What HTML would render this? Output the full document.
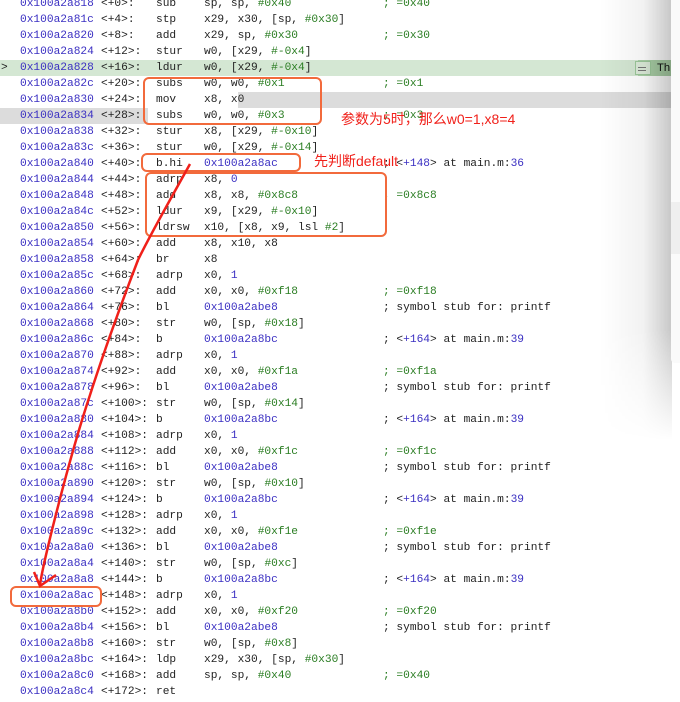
<!DOCTYPE html>
<html><head><meta charset="utf-8"><style>
html,body{margin:0;padding:0;background:#fff;width:680px;height:702px;overflow:hidden;position:relative}
.l{position:absolute;left:0;height:16px;width:680px;font:11.2px/16px "Liberation Mono",monospace;color:#222;white-space:pre}
.l span{position:absolute;top:0}
.a{left:20px;color:#3a2fc2}
.o{left:101px}
.m{left:156px}
.p{left:204px}
.c{left:383px}
.b{color:#3a2fc2}
.g{color:#2a7d22}
.box{position:absolute;border:2px solid #f26a3c;border-radius:6px}
.ann{position:absolute;color:#f0201a;font:14px/16px "Liberation Sans","Noto Sans CJK SC",sans-serif;white-space:nowrap}
</style></head><body>
<div style="position:absolute;left:0;top:60px;width:640px;height:16px;background:#d4e7d3"></div>
<div style="position:absolute;left:638px;top:60px;width:34px;height:16px;background:#a9cfa6"></div>
<div style="position:absolute;left:635px;top:61px;width:14px;height:12px;border:1px solid #9cc89a;background:#dcebd9"></div>
<div style="position:absolute;left:638px;top:67px;width:8px;height:1px;background:#777"></div>
<div style="position:absolute;left:638px;top:70px;width:8px;height:1px;background:#777"></div>
<div style="position:absolute;left:657px;top:60px;font:11.2px/16px 'Liberation Sans',sans-serif;color:#111">Th</div>
<div style="position:absolute;left:238px;top:92px;width:434px;height:16px;background:#dcdcdc"></div>
<div style="position:absolute;left:0;top:108px;width:148px;height:16px;background:#dcdcdc"></div>
<div style="position:absolute;left:600px;top:0;width:72px;height:440px;background:linear-gradient(90deg,rgba(0,0,0,0),rgba(0,0,0,0.05) 60%,rgba(0,0,0,0.22));-webkit-mask-image:linear-gradient(180deg,#000 75%,transparent);mask-image:linear-gradient(180deg,#000 75%,transparent)"></div>
<div style="position:absolute;left:671px;top:0;width:9px;height:363px;background:#fafafa;border-bottom-left-radius:4px"></div>
<div style="position:absolute;left:671px;top:202px;width:9px;height:52px;background:#efefef"></div>

<div class="l" style="top:-4px"><span class="a">0x100a2a818</span><span class="o">&lt;+0&gt;:</span><span class="m">sub</span><span class="p">sp, sp, <i class="g" style="font-style:normal">#0x40</i></span><span class="c g">; =0x40</span></div>
<div class="l" style="top:12px"><span class="a">0x100a2a81c</span><span class="o">&lt;+4&gt;:</span><span class="m">stp</span><span class="p">x29, x30, [sp, <b class="g" style="font-weight:normal">#0x30</b>]</span></div>
<div class="l" style="top:28px"><span class="a">0x100a2a820</span><span class="o">&lt;+8&gt;:</span><span class="m">add</span><span class="p">x29, sp, <b class="g" style="font-weight:normal">#0x30</b></span><span class="c g">; =0x30</span></div>
<div class="l" style="top:44px"><span class="a">0x100a2a824</span><span class="o">&lt;+12&gt;:</span><span class="m">stur</span><span class="p">w0, [x29, <b class="g" style="font-weight:normal">#-0x4</b>]</span></div>
<div class="l" style="top:60px"><span style="left:1px">&gt;</span><span class="a">0x100a2a828</span><span class="o">&lt;+16&gt;:</span><span class="m">ldur</span><span class="p">w0, [x29, <b class="g" style="font-weight:normal">#-0x4</b>]</span></div>
<div class="l" style="top:76px"><span class="a">0x100a2a82c</span><span class="o">&lt;+20&gt;:</span><span class="m">subs</span><span class="p">w0, w0, <b class="g" style="font-weight:normal">#0x1</b></span><span class="c g">; =0x1</span></div>
<div class="l" style="top:92px"><span class="a">0x100a2a830</span><span class="o">&lt;+24&gt;:</span><span class="m">mov</span><span class="p">x8, x0</span></div>
<div class="l" style="top:108px"><span class="a">0x100a2a834</span><span class="o">&lt;+28&gt;:</span><span class="m">subs</span><span class="p">w0, w0, <b class="g" style="font-weight:normal">#0x3</b></span><span class="c g">; =0x3</span></div>
<div class="l" style="top:124px"><span class="a">0x100a2a838</span><span class="o">&lt;+32&gt;:</span><span class="m">stur</span><span class="p">x8, [x29, <b class="g" style="font-weight:normal">#-0x10</b>]</span></div>
<div class="l" style="top:140px"><span class="a">0x100a2a83c</span><span class="o">&lt;+36&gt;:</span><span class="m">stur</span><span class="p">w0, [x29, <b class="g" style="font-weight:normal">#-0x14</b>]</span></div>
<div class="l" style="top:156px"><span class="a">0x100a2a840</span><span class="o">&lt;+40&gt;:</span><span class="m">b.hi</span><span class="p b">0x100a2a8ac</span><span class="c">; &lt;<b class="b" style="font-weight:normal">+148</b>&gt; at main.m:<b class="b" style="font-weight:normal">36</b></span></div>
<div class="l" style="top:172px"><span class="a">0x100a2a844</span><span class="o">&lt;+44&gt;:</span><span class="m">adrp</span><span class="p">x8, <b class="b" style="font-weight:normal">0</b></span></div>
<div class="l" style="top:188px"><span class="a">0x100a2a848</span><span class="o">&lt;+48&gt;:</span><span class="m">add</span><span class="p">x8, x8, <b class="g" style="font-weight:normal">#0x8c8</b></span><span class="c g">; =0x8c8</span></div>
<div class="l" style="top:204px"><span class="a">0x100a2a84c</span><span class="o">&lt;+52&gt;:</span><span class="m">ldur</span><span class="p">x9, [x29, <b class="g" style="font-weight:normal">#-0x10</b>]</span></div>
<div class="l" style="top:220px"><span class="a">0x100a2a850</span><span class="o">&lt;+56&gt;:</span><span class="m">ldrsw</span><span class="p">x10, [x8, x9, lsl <b class="g" style="font-weight:normal">#2</b>]</span></div>
<div class="l" style="top:236px"><span class="a">0x100a2a854</span><span class="o">&lt;+60&gt;:</span><span class="m">add</span><span class="p">x8, x10, x8</span></div>
<div class="l" style="top:252px"><span class="a">0x100a2a858</span><span class="o">&lt;+64&gt;:</span><span class="m">br</span><span class="p">x8</span></div>
<div class="l" style="top:268px"><span class="a">0x100a2a85c</span><span class="o">&lt;+68&gt;:</span><span class="m">adrp</span><span class="p">x0, <b class="b" style="font-weight:normal">1</b></span></div>
<div class="l" style="top:284px"><span class="a">0x100a2a860</span><span class="o">&lt;+72&gt;:</span><span class="m">add</span><span class="p">x0, x0, <b class="g" style="font-weight:normal">#0xf18</b></span><span class="c g">; =0xf18</span></div>
<div class="l" style="top:300px"><span class="a">0x100a2a864</span><span class="o">&lt;+76&gt;:</span><span class="m">bl</span><span class="p b">0x100a2abe8</span><span class="c">; symbol stub for: printf</span></div>
<div class="l" style="top:316px"><span class="a">0x100a2a868</span><span class="o">&lt;+80&gt;:</span><span class="m">str</span><span class="p">w0, [sp, <b class="g" style="font-weight:normal">#0x18</b>]</span></div>
<div class="l" style="top:332px"><span class="a">0x100a2a86c</span><span class="o">&lt;+84&gt;:</span><span class="m">b</span><span class="p b">0x100a2a8bc</span><span class="c">; &lt;<b class="b" style="font-weight:normal">+164</b>&gt; at main.m:<b class="b" style="font-weight:normal">39</b></span></div>
<div class="l" style="top:348px"><span class="a">0x100a2a870</span><span class="o">&lt;+88&gt;:</span><span class="m">adrp</span><span class="p">x0, <b class="b" style="font-weight:normal">1</b></span></div>
<div class="l" style="top:364px"><span class="a">0x100a2a874</span><span class="o">&lt;+92&gt;:</span><span class="m">add</span><span class="p">x0, x0, <b class="g" style="font-weight:normal">#0xf1a</b></span><span class="c g">; =0xf1a</span></div>
<div class="l" style="top:380px"><span class="a">0x100a2a878</span><span class="o">&lt;+96&gt;:</span><span class="m">bl</span><span class="p b">0x100a2abe8</span><span class="c">; symbol stub for: printf</span></div>
<div class="l" style="top:396px"><span class="a">0x100a2a87c</span><span class="o">&lt;+100&gt;:</span><span class="m">str</span><span class="p">w0, [sp, <b class="g" style="font-weight:normal">#0x14</b>]</span></div>
<div class="l" style="top:412px"><span class="a">0x100a2a880</span><span class="o">&lt;+104&gt;:</span><span class="m">b</span><span class="p b">0x100a2a8bc</span><span class="c">; &lt;<b class="b" style="font-weight:normal">+164</b>&gt; at main.m:<b class="b" style="font-weight:normal">39</b></span></div>
<div class="l" style="top:428px"><span class="a">0x100a2a884</span><span class="o">&lt;+108&gt;:</span><span class="m">adrp</span><span class="p">x0, <b class="b" style="font-weight:normal">1</b></span></div>
<div class="l" style="top:444px"><span class="a">0x100a2a888</span><span class="o">&lt;+112&gt;:</span><span class="m">add</span><span class="p">x0, x0, <b class="g" style="font-weight:normal">#0xf1c</b></span><span class="c g">; =0xf1c</span></div>
<div class="l" style="top:460px"><span class="a">0x100a2a88c</span><span class="o">&lt;+116&gt;:</span><span class="m">bl</span><span class="p b">0x100a2abe8</span><span class="c">; symbol stub for: printf</span></div>
<div class="l" style="top:476px"><span class="a">0x100a2a890</span><span class="o">&lt;+120&gt;:</span><span class="m">str</span><span class="p">w0, [sp, <b class="g" style="font-weight:normal">#0x10</b>]</span></div>
<div class="l" style="top:492px"><span class="a">0x100a2a894</span><span class="o">&lt;+124&gt;:</span><span class="m">b</span><span class="p b">0x100a2a8bc</span><span class="c">; &lt;<b class="b" style="font-weight:normal">+164</b>&gt; at main.m:<b class="b" style="font-weight:normal">39</b></span></div>
<div class="l" style="top:508px"><span class="a">0x100a2a898</span><span class="o">&lt;+128&gt;:</span><span class="m">adrp</span><span class="p">x0, <b class="b" style="font-weight:normal">1</b></span></div>
<div class="l" style="top:524px"><span class="a">0x100a2a89c</span><span class="o">&lt;+132&gt;:</span><span class="m">add</span><span class="p">x0, x0, <b class="g" style="font-weight:normal">#0xf1e</b></span><span class="c g">; =0xf1e</span></div>
<div class="l" style="top:540px"><span class="a">0x100a2a8a0</span><span class="o">&lt;+136&gt;:</span><span class="m">bl</span><span class="p b">0x100a2abe8</span><span class="c">; symbol stub for: printf</span></div>
<div class="l" style="top:556px"><span class="a">0x100a2a8a4</span><span class="o">&lt;+140&gt;:</span><span class="m">str</span><span class="p">w0, [sp, <b class="g" style="font-weight:normal">#0xc</b>]</span></div>
<div class="l" style="top:572px"><span class="a">0x100a2a8a8</span><span class="o">&lt;+144&gt;:</span><span class="m">b</span><span class="p b">0x100a2a8bc</span><span class="c">; &lt;<b class="b" style="font-weight:normal">+164</b>&gt; at main.m:<b class="b" style="font-weight:normal">39</b></span></div>
<div class="l" style="top:588px"><span class="a">0x100a2a8ac</span><span class="o">&lt;+148&gt;:</span><span class="m">adrp</span><span class="p">x0, <b class="b" style="font-weight:normal">1</b></span></div>
<div class="l" style="top:604px"><span class="a">0x100a2a8b0</span><span class="o">&lt;+152&gt;:</span><span class="m">add</span><span class="p">x0, x0, <b class="g" style="font-weight:normal">#0xf20</b></span><span class="c g">; =0xf20</span></div>
<div class="l" style="top:620px"><span class="a">0x100a2a8b4</span><span class="o">&lt;+156&gt;:</span><span class="m">bl</span><span class="p b">0x100a2abe8</span><span class="c">; symbol stub for: printf</span></div>
<div class="l" style="top:636px"><span class="a">0x100a2a8b8</span><span class="o">&lt;+160&gt;:</span><span class="m">str</span><span class="p">w0, [sp, <b class="g" style="font-weight:normal">#0x8</b>]</span></div>
<div class="l" style="top:652px"><span class="a">0x100a2a8bc</span><span class="o">&lt;+164&gt;:</span><span class="m">ldp</span><span class="p">x29, x30, [sp, <b class="g" style="font-weight:normal">#0x30</b>]</span></div>
<div class="l" style="top:668px"><span class="a">0x100a2a8c0</span><span class="o">&lt;+168&gt;:</span><span class="m">add</span><span class="p">sp, sp, <b class="g" style="font-weight:normal">#0x40</b></span><span class="c g">; =0x40</span></div>
<div class="l" style="top:684px"><span class="a">0x100a2a8c4</span><span class="o">&lt;+172&gt;:</span><span class="m">ret</span></div>

<div class="box" style="left:143px;top:77px;width:175px;height:44px"></div>
<div class="box" style="left:141px;top:153px;width:156px;height:15px"></div>
<div class="box" style="left:145px;top:172px;width:238px;height:61px"></div>
<div class="box" style="left:10px;top:586px;width:88px;height:17px"></div>
<div class="ann" style="left:341px;top:111px">参数为5时，那么w0=1,x8=4</div>
<div class="ann" style="left:314px;top:153px">先判断default</div>
<svg style="position:absolute;left:0;top:0" width="680" height="702">
<path d="M190 164 C170 200,150 235,138 260 C115 320,98 370,90 395 C75 440,62 490,52 530 C46 555,42 570,40 585" fill="none" stroke="#f0201a" stroke-width="2.5"/>
<path d="M34 572 L40 586 L56 575" fill="none" stroke="#f0201a" stroke-width="2.5"/>
</svg>
</body></html>
